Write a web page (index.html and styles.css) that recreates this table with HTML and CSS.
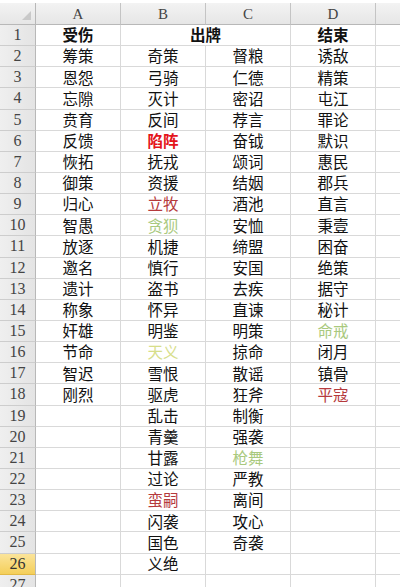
FILE: index.html
```html
<!DOCTYPE html>
<html lang="zh">
<head>
<meta charset="utf-8">
<link rel="stylesheet" href="styles.css">
</head>
<body>
<div class="sheet">
  <div class="corner"><span class="tri"></span></div>
  <div class="ch">A</div><div class="ch">B</div><div class="ch">C</div><div class="ch">D</div><div class="ch last"></div>

  <div class="rh">1</div><div class="c b">受伤</div><div class="c b span2">出牌</div><div class="c b">结束</div><div class="c e"></div>
  <div class="rh">2</div><div class="c">筹策</div><div class="c">奇策</div><div class="c">督粮</div><div class="c">诱敌</div><div class="c e"></div>
  <div class="rh">3</div><div class="c">恩怨</div><div class="c">弓骑</div><div class="c">仁德</div><div class="c">精策</div><div class="c e"></div>
  <div class="rh">4</div><div class="c">忘隙</div><div class="c">灭计</div><div class="c">密诏</div><div class="c">屯江</div><div class="c e"></div>
  <div class="rh">5</div><div class="c">贲育</div><div class="c">反间</div><div class="c">荐言</div><div class="c">罪论</div><div class="c e"></div>
  <div class="rh">6</div><div class="c">反馈</div><div class="c red b">陷阵</div><div class="c">奋钺</div><div class="c">默识</div><div class="c e"></div>
  <div class="rh">7</div><div class="c">恢拓</div><div class="c">抚戎</div><div class="c">颂词</div><div class="c">惠民</div><div class="c e"></div>
  <div class="rh">8</div><div class="c">御策</div><div class="c">资援</div><div class="c">结姻</div><div class="c">郡兵</div><div class="c e"></div>
  <div class="rh">9</div><div class="c">归心</div><div class="c dred">立牧</div><div class="c">酒池</div><div class="c">直言</div><div class="c e"></div>
  <div class="rh">10</div><div class="c">智愚</div><div class="c green">贪狈</div><div class="c">安恤</div><div class="c">秉壹</div><div class="c e"></div>
  <div class="rh">11</div><div class="c">放逐</div><div class="c">机捷</div><div class="c">缔盟</div><div class="c">困奋</div><div class="c e"></div>
  <div class="rh">12</div><div class="c">邀名</div><div class="c">慎行</div><div class="c">安国</div><div class="c">绝策</div><div class="c e"></div>
  <div class="rh">13</div><div class="c">遗计</div><div class="c">盗书</div><div class="c">去疾</div><div class="c">据守</div><div class="c e"></div>
  <div class="rh">14</div><div class="c">称象</div><div class="c">怀异</div><div class="c">直谏</div><div class="c">秘计</div><div class="c e"></div>
  <div class="rh">15</div><div class="c">奸雄</div><div class="c">明鉴</div><div class="c">明策</div><div class="c green">命戒</div><div class="c e"></div>
  <div class="rh">16</div><div class="c">节命</div><div class="c yellow">天义</div><div class="c">掠命</div><div class="c">闭月</div><div class="c e"></div>
  <div class="rh">17</div><div class="c">智迟</div><div class="c">雪恨</div><div class="c">散谣</div><div class="c">镇骨</div><div class="c e"></div>
  <div class="rh">18</div><div class="c">刚烈</div><div class="c">驱虎</div><div class="c">狂斧</div><div class="c dred">平寇</div><div class="c e"></div>
  <div class="rh">19</div><div class="c"></div><div class="c">乱击</div><div class="c">制衡</div><div class="c"></div><div class="c e"></div>
  <div class="rh">20</div><div class="c"></div><div class="c">青羹</div><div class="c">强袭</div><div class="c"></div><div class="c e"></div>
  <div class="rh">21</div><div class="c"></div><div class="c">甘露</div><div class="c green">枪舞</div><div class="c"></div><div class="c e"></div>
  <div class="rh">22</div><div class="c"></div><div class="c">过论</div><div class="c">严教</div><div class="c"></div><div class="c e"></div>
  <div class="rh">23</div><div class="c"></div><div class="c dred">蛮嗣</div><div class="c">离间</div><div class="c"></div><div class="c e"></div>
  <div class="rh">24</div><div class="c"></div><div class="c">闪袭</div><div class="c">攻心</div><div class="c"></div><div class="c e"></div>
  <div class="rh">25</div><div class="c"></div><div class="c">国色</div><div class="c">奇袭</div><div class="c"></div><div class="c e"></div>
  <div class="rh sel">26</div><div class="c"></div><div class="c">义绝</div><div class="c"></div><div class="c"></div><div class="c e"></div>
  <div class="rh">27</div><div class="c"></div><div class="c"></div><div class="c"></div><div class="c"></div><div class="c e"></div>
</div>
</body>
</html>
```
FILE: styles.css
```css
html, body {
  margin: 0;
  padding: 0;
  background: #ffffff;
  overflow: hidden;
}
body {
  padding-top: 3px;
  width: 400px;
  height: 587px;
  box-sizing: border-box;
}
.sheet {
  display: grid;
  grid-template-columns: 36px 85px 85px 85px 85px 40px;
  grid-template-rows: 22px repeat(27, 21.15px);
  width: 400px;
  overflow: hidden;
  font-family: "Noto Sans CJK SC", sans-serif;
}
.corner, .ch, .rh {
  background: linear-gradient(#f3f3f3, #e6e6e6);
  color: #444;
  font-family: "Liberation Serif", serif;
  font-size: 15px;
  display: flex;
  align-items: center;
  justify-content: center;
  box-sizing: border-box;
}
.corner {
  position: relative;
  border-right: 1px solid #b8b8b8;
  border-bottom: 1px solid #b8b8b8;
}
.tri {
  position: absolute;
  right: 4px;
  bottom: 4px;
  width: 0;
  height: 0;
  border-left: 9px solid transparent;
  border-bottom: 9px solid #c9c9c9;
}
.ch {
  border-right: 1px solid #c4c4c4;
  border-bottom: 1px solid #b8b8b8;
  padding-top: 1px;
}
.rh {
  border-right: 1px solid #b8b8b8;
  border-bottom: 1px solid #cdcdcd;
  background: linear-gradient(90deg, #efefef, #e4e4e4);
  font-size: 16px;
}
.rh.sel {
  background: linear-gradient(#fbe49a, #f4cf5a);
  color: #333;
  border-bottom: 1px solid #e2b945;
}
.c {
  border-right: 1px solid #d9d9d9;
  border-bottom: 1px solid #d9d9d9;
  box-sizing: border-box;
  display: flex;
  align-items: center;
  justify-content: center;
  font-size: 15.5px;
  color: #111;
  line-height: 1;
  white-space: nowrap;
}
.span2 { grid-column: span 2; }
.b { font-weight: bold; }
.red { color: #e4141a; }
.dred { color: #b53a3c; }
.green { color: #a9c97e; }
.yellow { color: #d7de8a; }
```
